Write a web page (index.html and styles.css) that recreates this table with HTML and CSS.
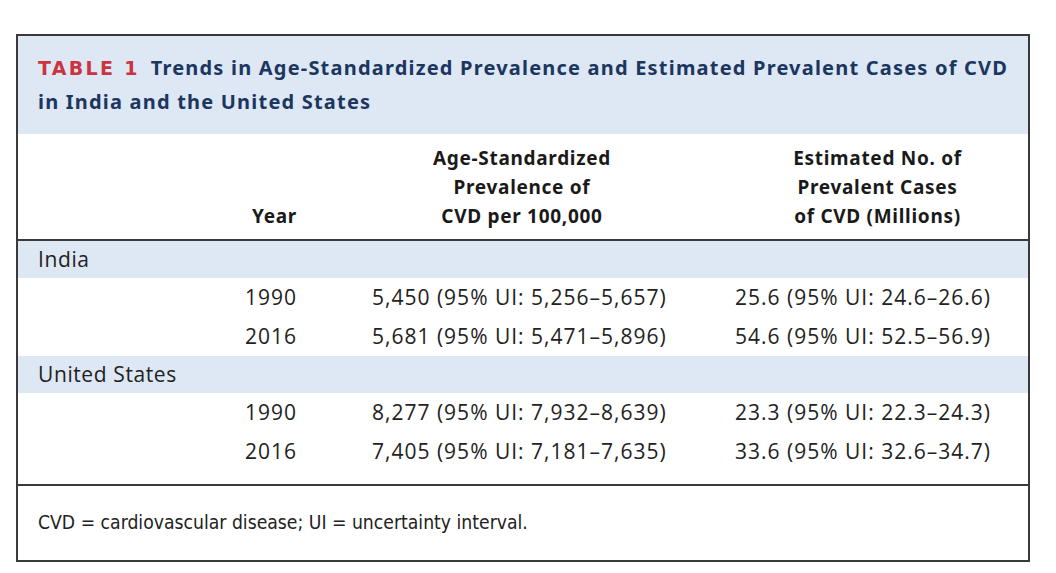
FILE: index.html
```html
<!DOCTYPE html>
<html>
<head>
<meta charset="utf-8">
<link rel="stylesheet" href="styles.css">
</head>
<body>
<div class="box">
  <div class="title">
    <span class="label">TABLE 1</span><span class="caption">Trends in Age-Standardized Prevalence and Estimated Prevalent Cases of CVD in India and the United States</span>
  </div>
  <table class="data">
    <colgroup>
      <col class="c-a"><col class="c-b"><col class="c-c"><col class="c-d">
    </colgroup>
    <thead>
      <tr>
        <th></th>
        <th class="year-h">Year</th>
        <th class="mid-h">Age-Standardized<br>Prevalence of<br>CVD per 100,000</th>
        <th class="mid-h">Estimated No. of<br>Prevalent Cases<br>of CVD (Millions)</th>
      </tr>
    </thead>
    <tbody>
      <tr class="group"><td colspan="4">India</td></tr>
      <tr class="row"><td></td><td class="yr">1990</td><td class="v1">5,450 (95% UI: 5,256–5,657)</td><td class="v2">25.6 (95% UI: 24.6–26.6)</td></tr>
      <tr class="row"><td></td><td class="yr">2016</td><td class="v1">5,681 (95% UI: 5,471–5,896)</td><td class="v2">54.6 (95% UI: 52.5–56.9)</td></tr>
      <tr class="group"><td colspan="4">United States</td></tr>
      <tr class="row"><td></td><td class="yr">1990</td><td class="v1">8,277 (95% UI: 7,932–8,639)</td><td class="v2">23.3 (95% UI: 22.3–24.3)</td></tr>
      <tr class="row last"><td></td><td class="yr">2016</td><td class="v1">7,405 (95% UI: 7,181–7,635)</td><td class="v2">33.6 (95% UI: 32.6–34.7)</td></tr>
    </tbody>
  </table>
  <div class="foot">CVD = cardiovascular disease; UI = uncertainty interval.</div>
</div>
</body>
</html>
```

FILE: styles.css
```css
html, body {
  margin: 0;
  padding: 0;
  background: #ffffff;
}
body {
  padding: 34px 0 0 16px;
  font-family: "Open Sans", "Noto Sans", sans-serif;
  color: #222;
}
.box {
  width: 1010px;
  border: 2px solid #3a3a3a;
  background: #fff;
}
.title {
  background: #dde8f4;
  padding: 15px 8px 15px 20px;
  height: 68px;
  font-family: "Noto Sans", sans-serif;
  font-weight: 700;
  font-size: 20px;
  line-height: 34px;
  letter-spacing: 1.2px;
  color: #1c3660;
}
.label {
  font-family: "DejaVu Sans", sans-serif;
  font-size: 19px;
  color: #cc3340;
  letter-spacing: 2.3px;
  margin-right: 11px;
}
.data {
  width: 1010px;
  border-collapse: collapse;
  table-layout: fixed;
  font-size: 21px;
  letter-spacing: 1px;
}
.c-a { width: 190px; }
.c-b { width: 109px; }
.c-c { width: 410px; }
.c-d { width: 301px; }
.data th {
  font-family: "Noto Sans", sans-serif;
  font-weight: 700;
  font-size: 19px;
  letter-spacing: 0.7px;
  line-height: 29px;
  color: #1a1a1a;
  vertical-align: bottom;
  padding: 10px 0 8px 0;
  height: 87px;
  border-bottom: 2px solid #3a3a3a;
}
.data th.year-h {
  text-align: right;
  padding-right: 20px;
}
.data th.mid-h {
  text-align: center;
}
.data td {
  padding: 0;
  line-height: 39px;
  height: 39px;
  white-space: nowrap;
}
.group td {
  background: #dde8f4;
  padding-left: 20px;
  height: 37px;
  line-height: 37px;
  letter-spacing: 0.6px;
}
.yr {
  text-align: right;
  padding-right: 20px !important;
}
.v1 { padding-left: 55px !important; }
.v2 { padding-left: 8px !important; }
.row.last td {
  height: 52px;
  line-height: 39px;
  vertical-align: top;
  border-bottom: 2px solid #3a3a3a;
}
.foot {
  height: 74px;
  line-height: 74px;
  padding-left: 20px;
  font-family: "DejaVu Sans Condensed", "DejaVu Sans", sans-serif;
  font-stretch: condensed;
  font-size: 19.2px;
  color: #222;
}
```
